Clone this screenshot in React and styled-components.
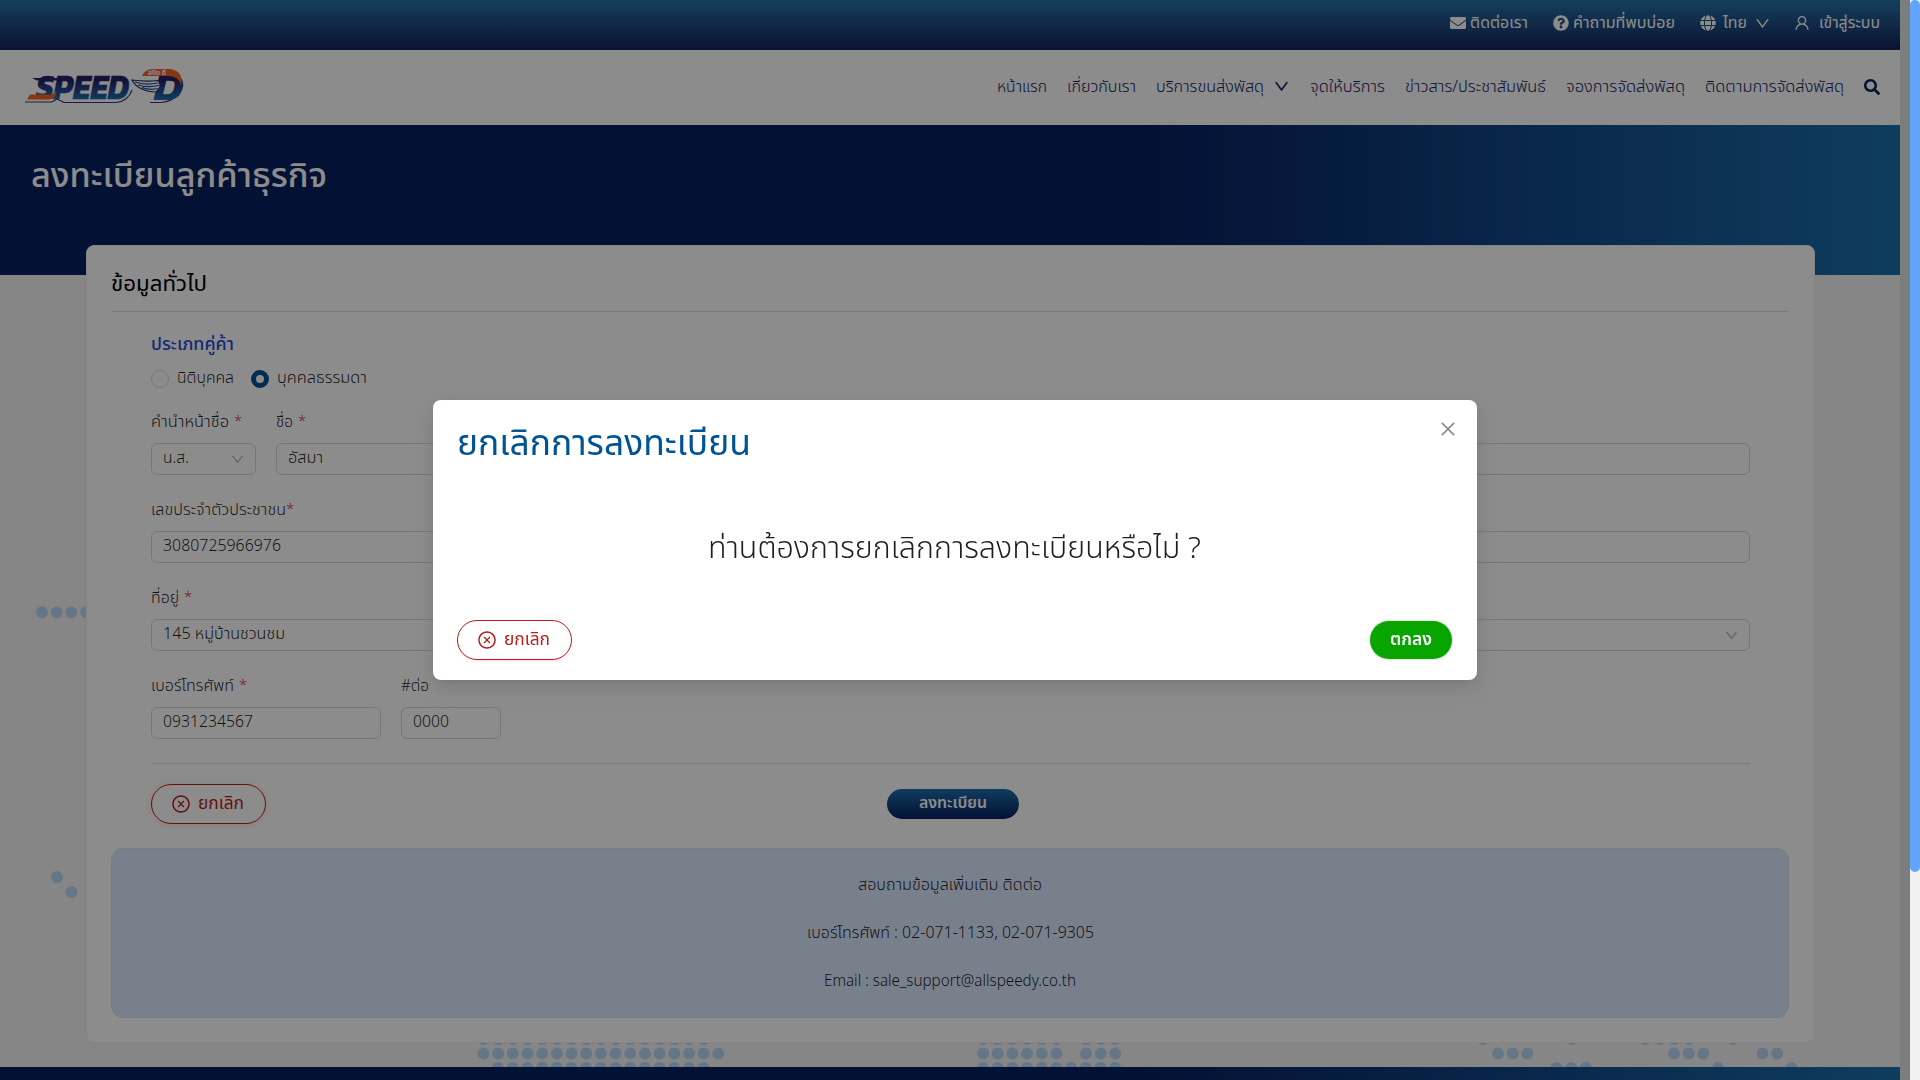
import React, { useLayoutEffect, useRef } from 'react';
import styled, { createGlobalStyle, css } from 'styled-components';
import { FaEnvelope, FaQuestionCircle, FaGlobe, FaSearch } from 'react-icons/fa';
import { AiOutlineUser, AiOutlineDown, AiOutlineClose, AiOutlineCloseCircle } from 'react-icons/ai';

const GlobalStyle = createGlobalStyle`
  *, *::before, *::after { box-sizing: border-box; }
  body {
    margin: 0;
    overflow: hidden;
    font-family: "Noto Sans Thai", "Noto Sans", sans-serif;
    font-weight: 340;
    color: rgba(0, 0, 0, 0.88);
  }
`;

/* ---------- text with a fixed advance width ---------- */
const FitBox = styled.span`
  display: inline-block;
  flex: none;
  width: ${p => p.$w}px;
  white-space: nowrap;
  text-align: left;
`;
const FitInner = styled.span`
  display: inline-block;
  transform-origin: left center;
  white-space: pre;
`;

function Fit({ w, children }) {
  const ref = useRef(null);
  useLayoutEffect(() => {
    const el = ref.current;
    if (el && el.offsetWidth) {
      el.style.transform = 'none';
      el.style.transform = `scaleX(${w / el.getBoundingClientRect().width})`;
    }
  }, [w, children]);
  return (
    <FitBox $w={w}>
      <FitInner ref={ref}>{children}</FitInner>
    </FitBox>
  );
}

/* ---------- page shell ---------- */
const Screen = styled.div`
  display: flex;
  width: 1920px;
  height: 1080px;
  overflow: hidden;
  background: #fff;
`;
const Page = styled.div`
  display: flex;
  flex-direction: column;
  flex: none;
  width: 1900px;
  height: 1080px;
`;
const Gutter = styled.div`
  flex: none;
  width: 10px;
  background: #e1e5e5;
`;
const ScrollTrack = styled.div`
  flex: none;
  width: 10px;
  background: #f1f1f1;
`;
const ScrollThumb = styled.div`
  height: 872px;
  border-radius: 5px;
  background: #60a5fa;
`;

/* ---------- header ---------- */
const TopBar = styled.div`
  flex: none;
  display: flex;
  justify-content: flex-end;
  align-items: center;
  height: 50px;
  padding: 0 20px 4px 0;
  font-size: 16px;
  line-height: 24px;
  font-weight: 400;
  color: #fff;
  background: linear-gradient(180deg, #2674a8 0%, #14235a 100%);
`;
const TopItem = styled.div`
  display: flex;
  align-items: center;
  gap: ${p => p.$gap}px;
  margin-left: ${p => p.$ml || 0}px;
  svg { flex: none; display: block; }
`;
const Header = styled.header`
  flex: none;
  display: flex;
  justify-content: space-between;
  align-items: center;
  height: 75px;
  padding: 0 20px 0 22px;
  background: #fff;
`;
const Nav = styled.nav`
  display: flex;
  align-items: center;
  gap: 20px;
  padding-bottom: 2px;
  font-size: 16px;
  line-height: 24px;
  color: #13215c;
`;
const NavLink = styled.a`
  display: flex;
  align-items: center;
  gap: 9px;
  color: inherit;
  svg { flex: none; display: block; }
`;

/* ---------- banner and body ---------- */
const Banner = styled.div`
  flex: none;
  height: 150px;
  padding: 27px 31px;
  font-size: 34px;
  line-height: 50px;
  font-weight: 500;
  color: #fff;
  background: linear-gradient(90deg, #071f5f 60%, #1b6fab 100%);
`;
const Body = styled.main`
  flex: none;
  display: grid;
  justify-items: center;
  height: 792px;
  background: #f5f5f5;
`;
const DotMap = styled.svg`
  grid-area: 1 / 1;
  width: 1900px;
  height: 792px;
`;
const Card = styled.section`
  grid-area: 1 / 1;
  display: flex;
  flex-direction: column;
  width: 1729px;
  height: 798px;
  margin: -30px 0 0 1px;
  padding: 0 25px 0 24px;
  border: 1px solid #f0f0f0;
  border-radius: 8px;
  background: #fff;
  z-index: 1;
`;
const Footer = styled.footer`
  flex: none;
  height: 13px;
  background: linear-gradient(90deg, #071f5f 60%, #1b6fab 100%);
`;

/* ---------- form ---------- */
const CardTitle = styled.h2`
  flex: none;
  height: 66px;
  margin: 0;
  padding-top: 21px;
  border-bottom: 1px solid #dfdfdf;
  font-size: 22px;
  line-height: 36px;
  font-weight: 400;
  color: #000;
`;
const Form = styled.div`
  flex: none;
  display: flex;
  flex-direction: column;
  margin: 0 39px 0 40px;
  font-size: 16px;
  line-height: 24px;
`;
const SectionLabel = styled.div`
  height: 53px;
  padding-top: 21px;
  font-size: 17.5px;
  font-weight: 500;
  color: #1d4ed8;
`;
const Radios = styled.div`
  display: flex;
  align-items: center;
  gap: 17px;
  height: 26px;
  margin-bottom: 18px;
`;
const Radio = styled.label`
  display: flex;
  align-items: center;
  gap: 8px;
`;
const RadioDot = styled.span`
  width: 18px;
  height: 18px;
  margin-top: 2px;
  border-radius: 50%;
  background: #fff;
  border: 1px solid #d9d9d9;
  ${p => p.$on && css`border: 5px solid #005394;`}
`;
const Row = styled.div`
  display: flex;
  gap: 20px;
  height: 88px;
`;
const Field = styled.div`
  display: flex;
  flex-direction: column;
  gap: 9px;
  width: ${p => (p.$w ? `${p.$w}px` : 'auto')};
  flex: ${p => (p.$w ? 'none' : '1')};
`;
const FieldLabel = styled.div`
  display: flex;
  gap: ${p => p.$gap ?? 5}px;
  height: 25px;
  padding-top: 1px;
`;
const Star = styled.span`
  color: #e11d48;
  font-size: 15px;
`;
const Input = styled.div`
  display: flex;
  justify-content: space-between;
  align-items: center;
  height: 32px;
  padding: 0 10px 3px 11px;
  border: 1px solid #d9d9d9;
  border-radius: 6px;
  color: rgba(0, 0, 0, 0.88);
  svg { display: block; margin-top: 3px; color: #b5b5b5; }
`;
const FormRule = styled.div`
  height: 1px;
  margin-top: 2px;
  background: #dfdfdf;
`;
const Actions = styled.div`
  display: grid;
  grid-template-columns: 1fr auto 1fr;
  align-items: center;
  height: 84px;
  padding-bottom: 4px;
`;

/* ---------- buttons ---------- */
const CancelButton = styled.button`
  display: flex;
  align-items: center;
  gap: 7px;
  width: 115px;
  height: 40px;
  padding: 0 0 1px 19px;
  border: 1px solid #b91c1c;
  border-radius: 20px;
  font: inherit;
  font-size: 18px;
  line-height: 26px;
  font-weight: 400;
  color: #b91c1c;
  background: #fff;
  box-shadow: ${p => (p.$halo ? '0 0 0 5px rgba(255,38,5,0.025), 0 2px 4px rgba(255,38,5,0.06)' : '0 2px 0 rgba(255,38,5,0.08)')};
  svg { flex: none; display: block; }
`;
const SubmitButton = styled.button`
  display: flex;
  align-items: center;
  justify-content: center;
  width: 132px;
  height: 30px;
  margin-left: 4px;
  padding: 0 0 2px;
  border: 0;
  border-radius: 15px;
  font: inherit;
  font-size: 16px;
  line-height: 24px;
  font-weight: 600;
  color: #fff;
  background: linear-gradient(180deg, #1b6fab 0%, #071f5f 100%);
`;
const OkButton = styled.button`
  display: flex;
  align-items: center;
  justify-content: center;
  width: 82px;
  height: 38px;
  margin-right: 1px;
  padding: 0 0 1px;
  border: 0;
  border-radius: 19px;
  font: inherit;
  font-size: 18px;
  line-height: 26px;
  font-weight: 600;
  color: #fff;
  background: #08a500;
  box-shadow: 0 0 1px 1px rgba(0, 60, 0, 0.12);
`;

const Contact = styled.div`
  flex: none;
  display: flex;
  flex-direction: column;
  align-items: center;
  gap: 24px;
  height: 170px;
  padding-top: 24px;
  border: 1px solid #d9e0f0;
  border-radius: 12px;
  font-size: 16px;
  line-height: 24px;
  background: #dbe9fe;
`;

/* ---------- modal ---------- */
const Overlay = styled.div`
  position: fixed;
  top: 0;
  left: 0;
  z-index: 5;
  display: flex;
  justify-content: center;
  align-items: center;
  width: 1910px;
  height: 1080px;
  background: rgba(0, 0, 0, 0.45);
`;
const Modal = styled.div`
  display: flex;
  flex-direction: column;
  width: 1044px;
  height: 280px;
  padding: 19px 24px 20px;
  border-radius: 8px;
  background: #fff;
  box-shadow: 0 6px 16px rgba(0,0,0,0.08), 0 3px 6px -4px rgba(0,0,0,0.12), 0 9px 28px 8px rgba(0,0,0,0.05);
`;
const ModalHead = styled.div`
  display: flex;
  justify-content: space-between;
  align-items: flex-start;
  height: 50px;
  font-size: 36px;
  line-height: 50px;
  font-weight: 430;
  color: #005394;
  svg { display: block; margin-right: -5px; color: #8a8a8a; }
`;
const ModalText = styled.div`
  display: flex;
  justify-content: center;
  margin: 57px 2px 48px 0;
  font-size: 30px;
  line-height: 46px;
`;
const ModalFoot = styled.div`
  display: flex;
  justify-content: space-between;
  align-items: center;
`;

/* ---------- drawings ---------- */
const run = (x, y, n) => Array.from({ length: n }, (_, i) => [x + i * 14.68, y]);
const DOTS = [
  ...run(42, 612.3, 4), [57, 877], [71.5, 892],
  ...run(483.5, 1039, 16), ...run(483.5, 1053.5, 17), ...run(498, 1068, 15),
  ...run(983, 1039, 6), ...run(1086, 1039, 3), ...run(983, 1053.5, 6), ...run(1086, 1053.5, 3), ...run(983, 1068, 10),
  [1483, 1039], [1571.5, 1039], ...run(1645, 1039, 4), [1733, 1039],
  ...run(1498, 1053.5, 3), ...run(1674, 1053.5, 3), ...run(1762.5, 1053.5, 2),
  ...run(1556.5, 1068, 3), [1718, 1068], [1791.5, 1068],
];

function Logo() {
  return (
    <svg width="166" height="70" viewBox="2 -12 166 70">
      <defs>
        <linearGradient id="ink" gradientUnits="userSpaceOnUse" x1="0" y1="12" x2="0" y2="36">
          <stop offset="0.15" stopColor="#27216b" />
          <stop offset="1" stopColor="#1d74b5" />
        </linearGradient>
      </defs>
      <path d="M5 37 H32 L37 34 L44 37.5 H96 Q108 36.5 112 25" fill="none" stroke="#3a3474" strokeWidth="1.1" />
      <path d="M130 37.5 H141 Q158 36 163 20" fill="none" stroke="#3a3474" strokeWidth="1.1" />
      <path d="M12 13 H38 L37 15.5 H17 Z" fill="#27216b" />
      <text x="16" y="34" fontFamily="Kanit, 'Liberation Sans', sans-serif" fontSize="34" fontWeight="700" fontStyle="italic"
        textLength="93" lengthAdjust="spacingAndGlyphs" fill="url(#ink)" stroke="url(#ink)" strokeWidth="0.3">SPEED</text>
      <path d="M10 29.5 H29 Q34 29.5 36 26 Q37 34.5 29 34.5 H7 Z" fill="#f26522" />
      <text x="134" y="35" fontFamily="Kanit, 'Liberation Sans', sans-serif" fontSize="38" fontWeight="700" fontStyle="italic"
        textLength="29" lengthAdjust="spacingAndGlyphs" fill="url(#ink)">D</text>
      <path d="M122 11 Q125 4 133 4 H150 Q164 6 161 21 Q159 11 149 11 Z" fill="#f26522" />
      <path d="M112 15 Q126 17 138 15.5 Q143 22 136 27 Q128 27 122 24 Q115 21 112 15 Z" fill="#fff" stroke="#27216b" strokeWidth="1.1" />
      <path d="M115 17 Q125 20.5 138 18 M118 20 Q128 23 139 20.5 M122 22.5 Q130 25.5 138 23.5" fill="none" stroke="#1d4a8a" strokeWidth="1.2" />
      <text x="128" y="10" fontSize="6.5" fontWeight="700" textLength="18" lengthAdjust="spacingAndGlyphs" fill="#fff">สปีด ดี</text>
    </svg>
  );
}

function Cancel({ halo }) {
  return (
    <CancelButton $halo={halo}>
      <AiOutlineCloseCircle size={20} />
      <Fit w={46}>ยกเลิก</Fit>
    </CancelButton>
  );
}

function LabeledField({ w, label, labelW, star, gap, children }) {
  return (
    <Field $w={w}>
      <FieldLabel $gap={gap}>
        {label && <Fit w={labelW}>{label}</Fit>}
        {star && <Star>*</Star>}
      </FieldLabel>
      <Input>{children}</Input>
    </Field>
  );
}

export default function App() {
  return (
    <Screen>
      <GlobalStyle />
      <Page>
        <TopBar>
          <TopItem $gap={4}><FaEnvelope size={16} /><Fit w={58}>ติดต่อเรา</Fit></TopItem>
          <TopItem $gap={4} $ml={25}><FaQuestionCircle size={16} /><Fit w={102}>คำถามที่พบบ่อย</Fit></TopItem>
          <TopItem $gap={7} $ml={25}>
            <FaGlobe size={16} /><Fit w={24}>ไทย</Fit><AiOutlineDown size={17} />
          </TopItem>
          <TopItem $gap={8} $ml={22}><AiOutlineUser size={18} /><Fit w={61}>เข้าสู่ระบบ</Fit></TopItem>
        </TopBar>
        <Header>
          <Logo />
          <Nav>
            <NavLink><Fit w={50}>หน้าแรก</Fit></NavLink>
            <NavLink><Fit w={69}>เกี่ยวกับเรา</Fit></NavLink>
            <NavLink><Fit w={108}>บริการขนส่งพัสดุ</Fit><AiOutlineDown size={17} stroke="currentColor" strokeWidth={20} /></NavLink>
            <NavLink><Fit w={75}>จุดให้บริการ</Fit></NavLink>
            <NavLink><Fit w={141}>ข่าวสาร/ประชาสัมพันธ์</Fit></NavLink>
            <NavLink><Fit w={119}>จองการจัดส่งพัสดุ</Fit></NavLink>
            <NavLink><Fit w={139}>ติดตามการจัดส่งพัสดุ</Fit></NavLink>
            <NavLink><FaSearch size={16} /></NavLink>
          </Nav>
        </Header>
        <Banner><Fit w={296}>ลงทะเบียนลูกค้าธุรกิจ</Fit></Banner>
        <Body>
          <DotMap viewBox="0 275 1900 792">
            {DOTS.map(([x, y]) => <circle key={`${x}-${y}`} cx={x} cy={y} r="6" fill="#b9d8f4" />)}
          </DotMap>
          <Card>
            <CardTitle><Fit w={96}>ข้อมูลทั่วไป</Fit></CardTitle>
            <Form>
              <SectionLabel><Fit w={83}>ประเภทคู่ค้า</Fit></SectionLabel>
              <Radios>
                <Radio><RadioDot /><Fit w={57}>นิติบุคคล</Fit></Radio>
                <Radio><RadioDot $on /><Fit w={90}>บุคคลธรรมดา</Fit></Radio>
              </Radios>
              <Row>
                <LabeledField w={105} label="คำนำหน้าชื่อ" labelW={78} star>
                  <Fit w={26}>น.ส.</Fit><AiOutlineDown size={15} />
                </LabeledField>
                <LabeledField label="ชื่อ" labelW={17} star><Fit w={35}>อัสมา</Fit></LabeledField>
                <LabeledField />
              </Row>
              <Row>
                <LabeledField label="เลขประจำตัวประชาชน" labelW={135} gap={0} star><Fit w={118}>3080725966976</Fit></LabeledField>
                <LabeledField />
              </Row>
              <Row>
                <LabeledField label="ที่อยู่" labelW={28} star><Fit w={122}>145 หมู่บ้านชวนชม</Fit></LabeledField>
                <LabeledField><span /><AiOutlineDown size={15} /></LabeledField>
              </Row>
              <Row>
                <LabeledField w={230} label="เบอร์โทรศัพท์" labelW={83} star><Fit w={90}>0931234567</Fit></LabeledField>
                <LabeledField w={100} label="#ต่อ" labelW={28}><Fit w={36}>0000</Fit></LabeledField>
              </Row>
              <FormRule />
              <Actions>
                <Cancel halo />
                <SubmitButton><Fit w={68}>ลงทะเบียน</Fit></SubmitButton>
              </Actions>
            </Form>
            <Contact>
              <Fit w={184}>สอบถามข้อมูลเพิ่มเติม ติดต่อ</Fit>
              <Fit w={287}>เบอร์โทรศัพท์ : 02-071-1133, 02-071-9305</Fit>
              <Fit w={252}>Email : sale_support@allspeedy.co.th</Fit>
            </Contact>
          </Card>
        </Body>
        <Footer />
      </Page>
      <Gutter />
      <ScrollTrack><ScrollThumb /></ScrollTrack>
      <Overlay>
        <Modal>
          <ModalHead>
            <Fit w={294}>ยกเลิกการลงทะเบียน</Fit>
            <AiOutlineClose size={20} />
          </ModalHead>
          <ModalText><Fit w={493}>ท่านต้องการยกเลิกการลงทะเบียนหรือไม่ ?</Fit></ModalText>
          <ModalFoot>
            <Cancel />
            <OkButton><Fit w={42}>ตกลง</Fit></OkButton>
          </ModalFoot>
        </Modal>
      </Overlay>
    </Screen>
  );
}
